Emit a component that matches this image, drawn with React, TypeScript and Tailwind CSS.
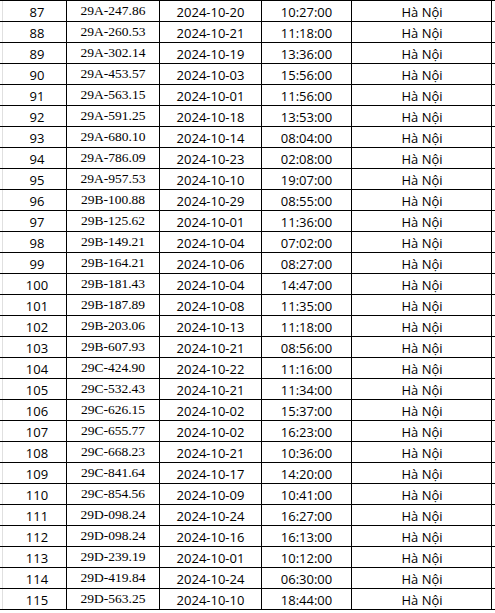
const ROWS: [number, string, string, string][] = [
  [87, "29A-247.86", "2024-10-20", "10:27:00"],
  [88, "29A-260.53", "2024-10-21", "11:18:00"],
  [89, "29A-302.14", "2024-10-19", "13:36:00"],
  [90, "29A-453.57", "2024-10-03", "15:56:00"],
  [91, "29A-563.15", "2024-10-01", "11:56:00"],
  [92, "29A-591.25", "2024-10-18", "13:53:00"],
  [93, "29A-680.10", "2024-10-14", "08:04:00"],
  [94, "29A-786.09", "2024-10-23", "02:08:00"],
  [95, "29A-957.53", "2024-10-10", "19:07:00"],
  [96, "29B-100.88", "2024-10-29", "08:55:00"],
  [97, "29B-125.62", "2024-10-01", "11:36:00"],
  [98, "29B-149.21", "2024-10-04", "07:02:00"],
  [99, "29B-164.21", "2024-10-06", "08:27:00"],
  [100, "29B-181.43", "2024-10-04", "14:47:00"],
  [101, "29B-187.89", "2024-10-08", "11:35:00"],
  [102, "29B-203.06", "2024-10-13", "11:18:00"],
  [103, "29B-607.93", "2024-10-21", "08:56:00"],
  [104, "29C-424.90", "2024-10-22", "11:16:00"],
  [105, "29C-532.43", "2024-10-21", "11:34:00"],
  [106, "29C-626.15", "2024-10-02", "15:37:00"],
  [107, "29C-655.77", "2024-10-02", "16:23:00"],
  [108, "29C-668.23", "2024-10-21", "10:36:00"],
  [109, "29C-841.64", "2024-10-17", "14:20:00"],
  [110, "29C-854.56", "2024-10-09", "10:41:00"],
  [111, "29D-098.24", "2024-10-24", "16:27:00"],
  [112, "29D-098.24", "2024-10-16", "16:13:00"],
  [113, "29D-239.19", "2024-10-01", "10:12:00"],
  [114, "29D-419.84", "2024-10-24", "06:30:00"],
  [115, "29D-563.25", "2024-10-10", "18:44:00"],
];

const cell = "flex h-[20px] items-center justify-center border-r border-black pt-[2px] leading-none";

export default function App() {
  return (
    <div className="h-[613px] w-[495px] overflow-hidden bg-white text-[13px] text-black [font-family:'Open_Sans',sans-serif]">
      <div className="border-t border-black">
        {ROWS.map(([n, plate, date, time]) => (
          <div
            key={n}
            className="grid grid-cols-[67px_93px_102px_90px_140px_3px] border-b border-black"
          >
            <div className={cell + " relative pl-[8px]"}>
              <span className="absolute top-0 bottom-0 left-[2px] w-px bg-[#e0e0e0]" />
              {n}
            </div>
            <div className={cell + " pb-[2px] text-[13.5px] [font-family:'Liberation_Serif',serif]"}>
              {plate}
            </div>
            <div className={cell}>{date}</div>
            <div className={cell}>{time}</div>
            <div className={cell + " pl-[1px]"}>Hà Nội</div>
            <div className="h-[20px]" />
          </div>
        ))}
      </div>
    </div>
  );
}
